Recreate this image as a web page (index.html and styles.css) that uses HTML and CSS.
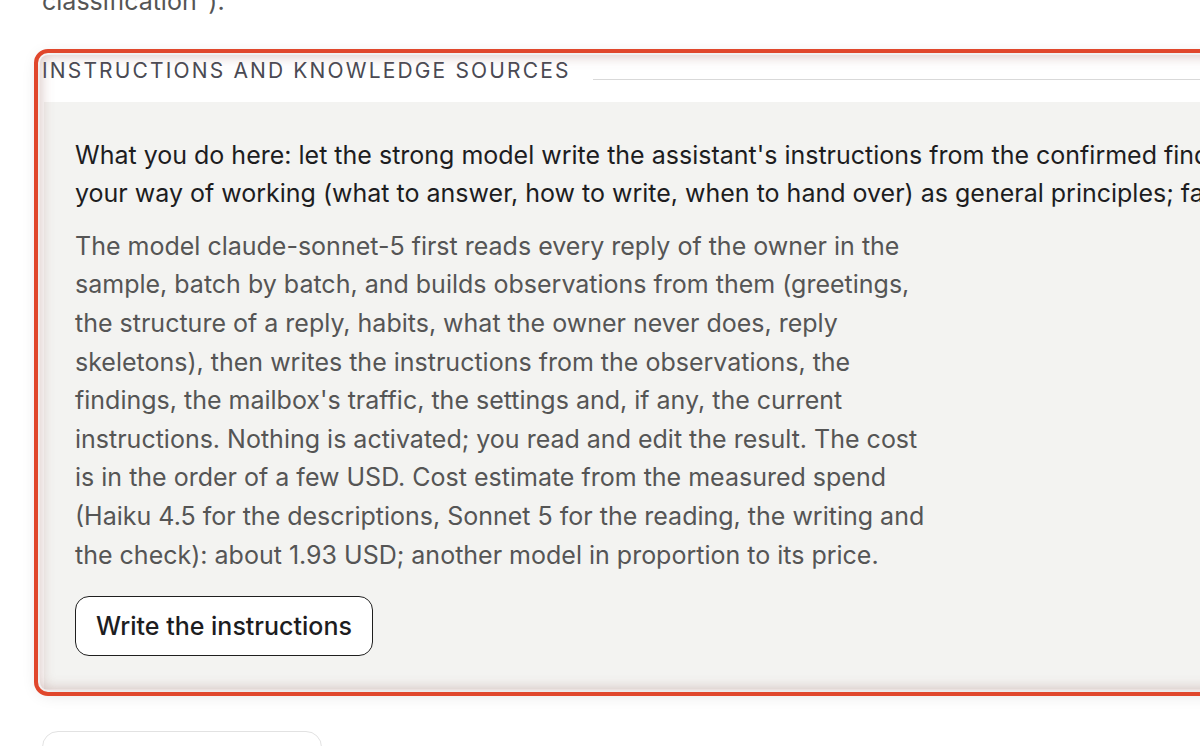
FILE: index.html
```html
<!DOCTYPE html>
<html lang="en">
<head>
<meta charset="utf-8">
<title>Instructions and knowledge sources</title>
<link rel="stylesheet" href="styles.css">
</head>
<body>
<div class="page">
  <p class="prev">classification").</p>

  <section class="panel">
    <div class="legend-row">
      <h2 class="legend">Instructions and knowledge sources</h2>
      <div class="legend-line"></div>
    </div>
    <div class="card">
      <p class="lead">What you do here: let the strong model write the assistant's instructions from the confirmed findings and<br>your way of working (what to answer, how to write, when to hand over) as general principles; facts stay in the knowledge sources.</p>
      <p class="desc">The model claude-sonnet-5 first reads every reply of the owner in the sample, batch by batch, and builds observations from them (greetings, the structure of a reply, habits, what the owner never does, reply skeletons), then writes the instructions from the observations, the findings, the mailbox's traffic, the settings and, if any, the current instructions. Nothing is activated; you read and edit the result. The cost is in the order of a few USD. Cost estimate from the measured spend (Haiku 4.5 for the descriptions, Sonnet 5 for the reading, the writing and the check): about 1.93 USD; another model in proportion to its price.</p>
      <button class="btn" type="button">Write the instructions</button>
    </div>
  </section>

  <div class="next-box"></div>
</div>
</body>
</html>
```

FILE: styles.css
```css
html, body {
  margin: 0;
  padding: 0;
  background: #ffffff;
  overflow: hidden;
}

body {
  font-family: Inter, "Noto Sans", "Liberation Sans", sans-serif;
  color: #1d1d1f;
  width: 1200px;
  height: 746px;
}

.page {
  width: 1560px;
  padding-left: 42px;
}

.prev {
  margin: -18px 0 0;
  font-size: 25px;
  line-height: 38px;
  color: #555555;
}

.panel {
  position: relative;
  margin: 35px 0 0 -2px;
  border-radius: 8px;
  outline: 4px solid #e0472c;
  outline-offset: 2px;
  box-shadow: 0 2px 18px rgba(0, 0, 0, 0.16);
  background: #ffffff;
  padding-bottom: 1px;
}

.panel::after {
  content: "";
  position: absolute;
  inset: 0;
  border-radius: 8px;
  box-shadow: inset 0 0 14px rgba(160, 110, 104, 0.45);
  pointer-events: none;
}

.legend-row {
  display: flex;
  align-items: flex-start;
  padding: 2px 0 0 2px;
}

.legend {
  margin: 0 22px 0 0;
  font-size: 21px;
  line-height: 28px;
  font-weight: 400;
  letter-spacing: 2.15px;
  text-transform: uppercase;
  color: #4a4a53;
  white-space: nowrap;
}

.legend-line {
  flex: 1;
  height: 1px;
  margin-top: 22px;
  background: #d9d9d9;
}

.card {
  margin: 17px 0 0 4px;
  background: #f3f3f1;
  padding: 34px 30px 33px 31px;
}

.lead {
  margin: 0;
  white-space: nowrap;
  font-size: 25px;
  line-height: 38.4px;
  color: #1d1d1f;
}

.desc {
  margin: 14px 0 0;
  max-width: 856px;
  font-size: 25px;
  line-height: 38.6px;
  color: #555555;
}

.btn {
  display: block;
  margin-top: 22px;
  height: 60px;
  padding: 0 20px;
  border: 1.5px solid #1f1f1f;
  border-radius: 14px;
  background: #ffffff;
  font-family: inherit;
  font-size: 25px;
  font-weight: 500;
  color: #1d1d1f;
  cursor: pointer;
}

.next-box {
  margin-top: 41px;
  width: 278px;
  height: 60px;
  border: 1px solid #e2e2e2;
  border-radius: 16px;
  background: #ffffff;
}
```
